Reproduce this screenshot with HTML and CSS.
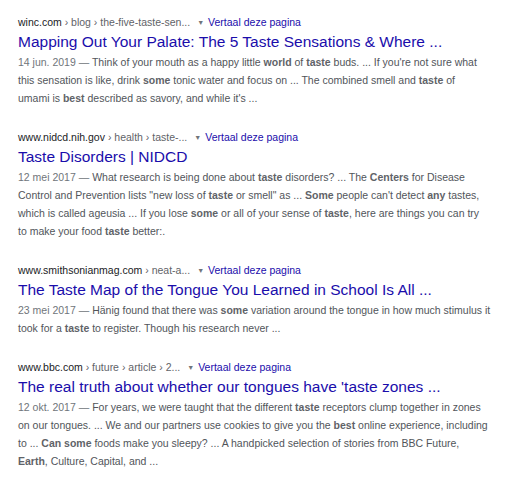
FILE: index.html
```html
<!DOCTYPE html>
<html>
<head>
<meta charset="utf-8">
<link rel="stylesheet" href="styles.css">
</head>
<body>
<div class="results">
  <div class="result">
    <div class="url"><span class="host">winc.com</span><span class="crumb"> › blog › the-five-taste-sen...</span><span class="arrow">▼</span><a class="translate">Vertaal deze pagina</a></div>
    <a class="title">Mapping Out Your Palate: The 5 Taste Sensations &amp; Where ...</a>
    <div class="snippet">
      <span class="line"><span class="date">14 jun. 2019 — </span>Think of your mouth as a happy little <b>world</b> of <b>taste</b> buds. ... If you're not sure what</span>
      <span class="line">this sensation is like, drink <b>some</b> tonic water and focus on ... The combined smell and <b>taste</b> of</span>
      <span class="line">umami is <b>best</b> described as savory, and while it's ...</span>
    </div>
  </div>
  <div class="result">
    <div class="url"><span class="host">www.nidcd.nih.gov</span><span class="crumb"> › health › taste-...</span><span class="arrow">▼</span><a class="translate">Vertaal deze pagina</a></div>
    <a class="title">Taste Disorders | NIDCD</a>
    <div class="snippet">
      <span class="line"><span class="date">12 mei 2017 — </span>What research is being done about <b>taste</b> disorders? ... The <b>Centers</b> for Disease</span>
      <span class="line">Control and Prevention lists "new loss of <b>taste</b> or smell" as ... <b>Some</b> people can't detect <b>any</b> tastes,</span>
      <span class="line">which is called ageusia ... If you lose <b>some</b> or all of your sense of <b>taste</b>, here are things you can try</span>
      <span class="line">to make your food <b>taste</b> better:.</span>
    </div>
  </div>
  <div class="result">
    <div class="url"><span class="host">www.smithsonianmag.com</span><span class="crumb"> › neat-a...</span><span class="arrow">▼</span><a class="translate">Vertaal deze pagina</a></div>
    <a class="title">The Taste Map of the Tongue You Learned in School Is All ...</a>
    <div class="snippet">
      <span class="line"><span class="date">23 mei 2017 — </span>Hänig found that there was <b>some</b> variation around the tongue in how much stimulus it</span>
      <span class="line">took for a <b>taste</b> to register. Though his research never ...</span>
    </div>
  </div>
  <div class="result">
    <div class="url"><span class="host">www.bbc.com</span><span class="crumb"> › future › article › 2...</span><span class="arrow">▼</span><a class="translate">Vertaal deze pagina</a></div>
    <a class="title">The real truth about whether our tongues have 'taste zones ...</a>
    <div class="snippet">
      <span class="line"><span class="date">12 okt. 2017 — </span>For years, we were taught that the different <b>taste</b> receptors clump together in zones</span>
      <span class="line">on our tongues. ... We and our partners use cookies to give you the <b>best</b> online experience, including</span>
      <span class="line">to ... <b>Can some</b> foods make you sleepy? ... A handpicked selection of stories from BBC Future,</span>
      <span class="line"><b>Earth</b>, Culture, Capital, and ...</span>
    </div>
  </div>
</div>
</body>
</html>
```
FILE: styles.css
```css
html, body {
  margin: 0;
  padding: 0;
  background: #ffffff;
}
body {
  font-family: "Liberation Sans", Arial, sans-serif;
}
.results {
  padding: 14px 0 0 18px;
  width: 495px;
  display: flex;
  flex-direction: column;
  gap: 22px;
}
.result {
  display: flex;
  flex-direction: column;
}
.url {
  font-size: 10.5px;
  line-height: 16px;
  color: #202124;
  white-space: nowrap;
}
.crumb {
  color: #5f6368;
}
.arrow {
  color: #70757a;
  font-size: 7px;
  margin: 0 4px 0 7px;
  vertical-align: 1px;
}
.translate {
  color: #1a0dab;
}
.title {
  font-size: 15.5px;
  line-height: 22px;
  color: #1a0dab;
  white-space: nowrap;
}
.snippet {
  display: flex;
  flex-direction: column;
  font-size: 10.5px;
  line-height: 18px;
  color: #51555a;
}
.line {
  display: block;
  white-space: nowrap;
}
.snippet b {
  font-weight: bold;
  color: #5f6368;
}
.date {
  color: #70757a;
}
```
